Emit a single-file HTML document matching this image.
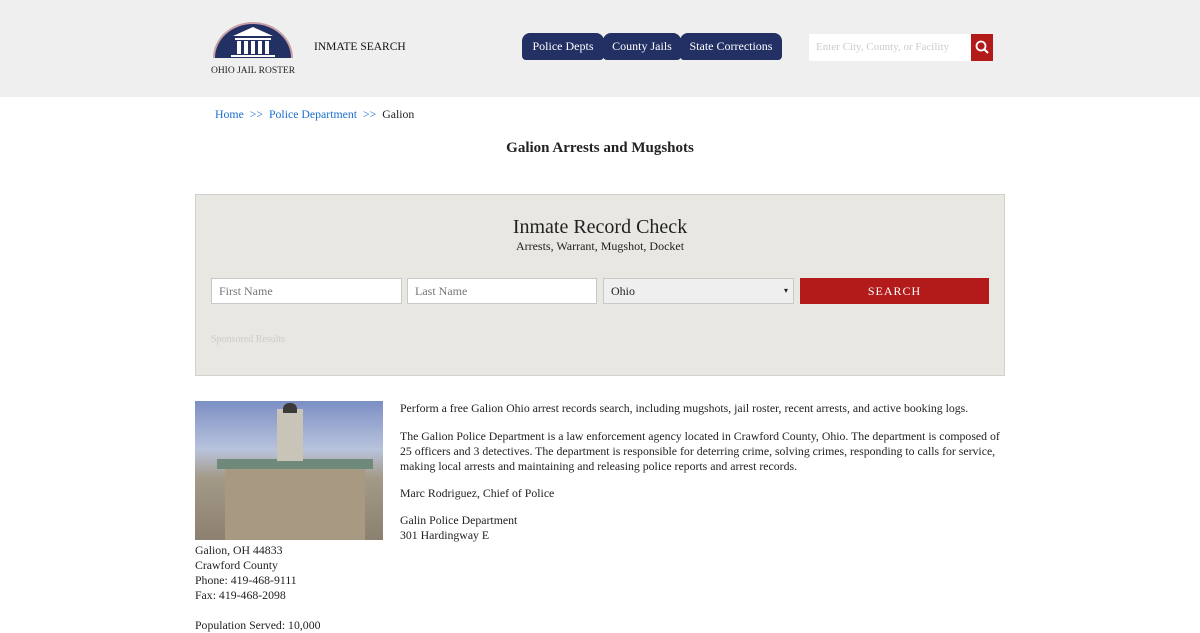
<!DOCTYPE html>
<html><head><style>
*{margin:0;padding:0;box-sizing:border-box}
body{width:1200px;height:620px;overflow:hidden;background:#fff;font-family:"Liberation Serif",serif;color:#222;font-size:11.8px;position:relative}
.hdr{position:absolute;left:0;top:0;width:1200px;height:97px;background:#efefef}
.tab{position:absolute;top:33px;height:27px;background:#223064;color:#fff;font-size:12px;line-height:27px;text-align:center;border-radius:8px 8px 4px 4px}
a{color:#1a6fd0;text-decoration:none}
.abs{position:absolute}
.box{position:absolute;left:195px;top:194px;width:810px;height:182px;background:#e8e7e2;border:1px solid #d2d2cc}
.fld{position:absolute;top:83px;height:26px;background:#fff;border:1px solid #c9c9c9;color:#777;font-size:12px;line-height:24px;padding-left:7px}
p{margin-bottom:12px;line-height:15px}
</style></head><body>
<div class="hdr">
<svg class="abs" style="left:209px;top:20px" width="88" height="56" viewBox="0 0 88 56">
<path d="M4 38 A40 36 0 0 1 84 38 Z" fill="#c9a0a8"/>
<path d="M6 38 A38 34 0 0 1 82 38 Z" fill="#223064"/>
<polygon points="24,16 44,7 64,16" fill="#fff"/>
<rect x="26" y="18" width="36" height="2" fill="#fff"/>
<rect x="28" y="21" width="4" height="13" fill="#fff"/><rect x="35" y="21" width="4" height="13" fill="#fff"/><rect x="42" y="21" width="4" height="13" fill="#fff"/><rect x="49" y="21" width="4" height="13" fill="#fff"/><rect x="56" y="21" width="4" height="13" fill="#fff"/>
<rect x="22" y="35" width="44" height="2" fill="#fff"/>
<text x="44" y="53" text-anchor="middle" font-family="Liberation Serif,serif" font-size="9.5" fill="#222">OHIO JAIL ROSTER</text>
</svg>
<div class="abs" style="left:314px;top:41px;font-size:11.5px;color:#111">INMATE SEARCH</div>
<div class="tab" style="left:522px;width:82px">Police Depts</div>
<div class="tab" style="left:603px;width:78px">County Jails</div>
<div class="tab" style="left:680px;width:102px">State Corrections</div>
<div class="abs" style="left:809px;top:34px;width:162px;height:27px;background:#fff;color:#ccc;font-size:11px;line-height:27px;padding-left:7px">Enter City, County, or Facility</div>
<div class="abs" style="left:971px;top:34px;width:22px;height:27px;background:#b31b1b">
<svg width="22" height="27"><circle cx="10" cy="12" r="4.5" stroke="#fff" stroke-width="1.8" fill="none"/><line x1="13" y1="15" x2="17" y2="19" stroke="#fff" stroke-width="2"/></svg></div>
</div>
<div class="abs" style="left:215px;top:107px"><a>Home</a> &nbsp;<a>&gt;&gt;</a>&nbsp; <a>Police Department</a> &nbsp;<a>&gt;&gt;</a>&nbsp; Galion</div>
<div class="abs" style="left:0;width:1200px;top:140px;text-align:center;font-size:15px;font-weight:bold;color:#222">Galion Arrests and Mugshots</div>
<div class="box">
<div class="abs" style="left:0;width:808px;top:21px;text-align:center;font-size:20px;color:#222">Inmate Record Check</div>
<div class="abs" style="left:0;width:808px;top:44px;text-align:center;font-size:12px;color:#222">Arrests, Warrant, Mugshot, Docket</div>
<div class="fld" style="left:15px;width:191px">First Name</div>
<div class="fld" style="left:211px;width:190px">Last Name</div>
<div class="fld" style="left:407px;width:191px;background:#efefef;color:#222">Ohio<span style="position:absolute;right:5px;font-size:8px">&#9662;</span></div>
<div class="abs" style="left:604px;top:83px;width:189px;height:26px;background:#b31b1b;color:#fff;text-align:center;line-height:26px;font-size:12px;letter-spacing:1px">SEARCH</div>
<div class="abs" style="left:15px;top:139px;font-size:10px;color:#ccc">Sponsored Results</div>
</div>
<div class="abs" style="left:195px;top:401px;width:188px;height:139px;background:linear-gradient(#7c8fc4 0%,#b8c3dc 35%,#a49a88 55%,#8c8070 100%)">
<div class="abs" style="left:30px;top:60px;width:140px;height:79px;background:#a89a82"></div>
<div class="abs" style="left:22px;top:58px;width:156px;height:10px;background:#6f8a7a"></div>
<div class="abs" style="left:82px;top:8px;width:26px;height:52px;background:#c9c4b8"></div>
<div class="abs" style="left:88px;top:2px;width:14px;height:10px;background:#3a3a3a;border-radius:6px 6px 0 0"></div>
</div>
<div class="abs" style="left:195px;top:543px;line-height:15px">Galion, OH 44833<br>Crawford County<br>Phone: 419-468-9111<br>Fax: 419-468-2098<br><br>Population Served: 10,000</div>
<div class="abs" style="left:400px;top:401px;width:600px">
<p style="margin-bottom:13px">Perform a free Galion Ohio arrest records search, including mugshots, jail roster, recent arrests, and active booking logs.</p>
<p>The Galion Police Department is a law enforcement agency located in Crawford County, Ohio. The department is composed of 25 officers and 3 detectives. The department is responsible for deterring crime, solving crimes, responding to calls for service, making local arrests and maintaining and releasing police reports and arrest records.</p>
<p>Marc Rodriguez, Chief of Police</p>
<p>Galin Police Department<br>301 Hardingway E</p>
</div>
</body></html>
